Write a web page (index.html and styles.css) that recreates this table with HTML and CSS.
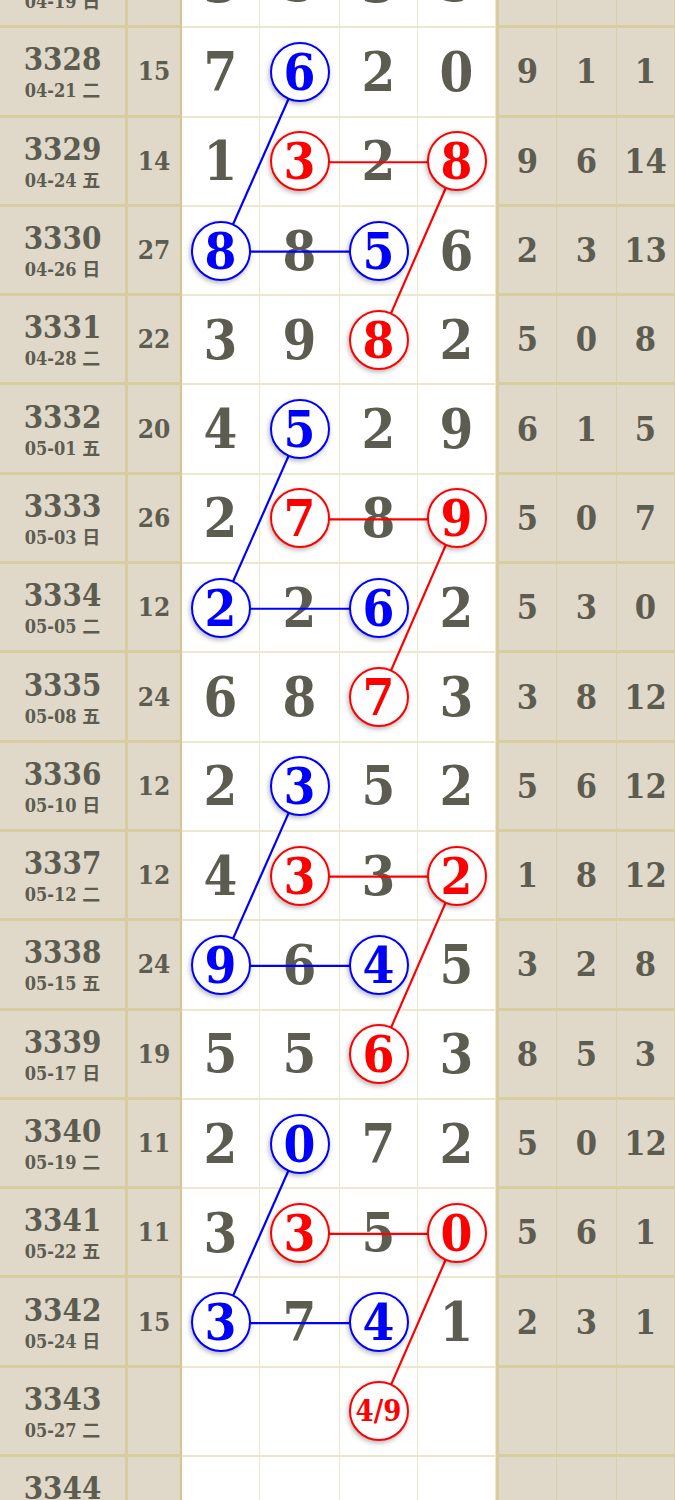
FILE: index.html
```html
<!DOCTYPE html>
<html lang="zh-CN">
<head>
    <meta charset="UTF-8">
    <meta name="viewport" content="width=device-width, initial-scale=1.0">
    <title>排列五 走势图</title>
    <link rel="stylesheet" href="styles.css">
</head>
<body>
    <div class="chart" id="chart">
        <svg class="links" id="links" xmlns="http://www.w3.org/2000/svg"></svg>
    </div>

    <script>
        // 期号, 日期, 和值, 四位号码, 右侧三列
        const rows = [
            ['3327', '04-19 日', '16', ['3', '5', '3', '5'], ['4', '2', '9']],
            ['3328', '04-21 二', '15', ['7', '6', '2', '0'], ['9', '1', '1']],
            ['3329', '04-24 五', '14', ['1', '3', '2', '8'], ['9', '6', '14']],
            ['3330', '04-26 日', '27', ['8', '8', '5', '6'], ['2', '3', '13']],
            ['3331', '04-28 二', '22', ['3', '9', '8', '2'], ['5', '0', '8']],
            ['3332', '05-01 五', '20', ['4', '5', '2', '9'], ['6', '1', '5']],
            ['3333', '05-03 日', '26', ['2', '7', '8', '9'], ['5', '0', '7']],
            ['3334', '05-05 二', '12', ['2', '2', '6', '2'], ['5', '3', '0']],
            ['3335', '05-08 五', '24', ['6', '8', '7', '3'], ['3', '8', '12']],
            ['3336', '05-10 日', '12', ['2', '3', '5', '2'], ['5', '6', '12']],
            ['3337', '05-12 二', '12', ['4', '3', '3', '2'], ['1', '8', '12']],
            ['3338', '05-15 五', '24', ['9', '6', '4', '5'], ['3', '2', '8']],
            ['3339', '05-17 日', '19', ['5', '5', '6', '3'], ['8', '5', '3']],
            ['3340', '05-19 二', '11', ['2', '0', '7', '2'], ['5', '0', '12']],
            ['3341', '05-22 五', '11', ['3', '3', '5', '0'], ['5', '6', '1']],
            ['3342', '05-24 日', '15', ['3', '7', '4', '1'], ['2', '3', '1']],
            ['3343', '05-27 二', '', ['', '', '4/9', ''], ['', '', '']],
            ['3344', '05-29 五', '', ['', '', '', ''], ['', '', '']]
        ];

        // 圈出的号码: 行序号 -> {列: 颜色}
        const marks = {};
        const links = [];
        for (let g = 1; g <= 13; g += 4) {
            marks[g] = { 1: 'blue' };
            marks[g + 1] = { 1: 'red', 3: 'red' };
            marks[g + 2] = { 0: 'blue', 2: 'blue' };
            marks[g + 3] = { 2: 'red' };
            links.push([g, 1, g + 2, 0, 'blue'], [g + 2, 0, g + 2, 2, 'blue']);
            links.push([g + 1, 1, g + 1, 3, 'red'], [g + 1, 3, g + 3, 2, 'red']);
        }

        const chart = document.getElementById('chart');
        const svg = document.getElementById('links');

        rows.forEach((r, i) => {
            const row = document.createElement('div');
            row.className = 'row';
            let html = `<div class="cell issue"><b>${r[0]}</b><small>${r[1]}</small></div>`;
            html += `<div class="cell sum">${r[2]}</div>`;
            r[3].forEach((d, c) => {
                const color = marks[i] && marks[i][c];
                const inner = color ? `<span class="ball ${color}${d.length > 1 ? ' guess' : ''}">${d}</span>` : d;
                html += `<div class="cell num" data-pos="${i}-${c}">${inner}</div>`;
            });
            r[4].forEach(s => { html += `<div class="cell stat">${s}</div>`; });
            row.innerHTML = html;
            chart.appendChild(row);
        });

        function center(i, c) {
            const box = chart.getBoundingClientRect();
            const rect = chart.querySelector(`[data-pos="${i}-${c}"]`).getBoundingClientRect();
            return [rect.left + rect.width / 2 - box.left, rect.top + rect.height / 2 - box.top];
        }

        links.forEach(([r1, c1, r2, c2, color]) => {
            const [x1, y1] = center(r1, c1);
            const [x2, y2] = center(r2, c2);
            const line = document.createElementNS('http://www.w3.org/2000/svg', 'line');
            line.setAttribute('x1', x1);
            line.setAttribute('y1', y1);
            line.setAttribute('x2', x2);
            line.setAttribute('y2', y2);
            line.setAttribute('class', color);
            svg.appendChild(line);
        });
    </script>
</body>
</html>
```

FILE: styles.css
```css
body {
    margin: 0;
    background: #fff;
    font-family: "DejaVu Serif Condensed", "DejaVu Serif", "Noto Sans CJK SC", serif;
    font-weight: bold;
    color: #5c5c50;
}
.chart {
    position: relative;
    margin-top: -61px;
}
.row {
    display: grid;
    grid-template-columns: 128px 54px 78px 80px 78px 78px 61px 60px 58px;
    height: 89.3px;
}
.cell {
    box-sizing: border-box;
    display: flex;
    align-items: center;
    justify-content: center;
    border-bottom: 2px solid #ede8cd;
    border-right: 1px solid #ede8cd;
}
.issue {
    flex-direction: column;
    background: #e0d8c8;
    border-right: 3px solid #d8cd9f;
    border-bottom: 3px solid #d8cd9f;
    padding-top: 2px;
}
.issue b {
    font-size: 31px;
    line-height: 34px;
}
.issue small {
    font-size: 18px;
    line-height: 22px;
    margin-top: 4px;
    font-weight: bold;
}
.sum {
    background: #e0d8c8;
    font-size: 26px;
    border-right: 2px solid #d3c78f;
    border-bottom: 3px solid #d8cd9f;
}
.num {
    font-size: 54px;
}
.stat {
    background: #e0d8c8;
    font-size: 34px;
    border-right: 1px solid #d8cfa8;
    border-bottom: 3px solid #d8cd9f;
}
.num + .stat {
    border-left: 3px solid #d8cd9f;
}
.ball {
    position: relative;
    z-index: 2;
    box-sizing: border-box;
    width: 60px;
    height: 60px;
    border-radius: 50%;
    background: #fff;
    display: flex;
    align-items: center;
    justify-content: center;
    font-size: 51px;
    box-shadow: -1px 2px 5px rgba(0, 0, 0, 0.3);
}
.ball.red {
    color: #f00;
    border: 2.5px solid #f00;
}
.ball.blue {
    color: #00f;
    border: 2.5px solid #00f;
}
.ball.guess {
    font-size: 29px;
}
.links {
    position: absolute;
    left: 0;
    top: 0;
    width: 100%;
    height: 100%;
    z-index: 1;
    pointer-events: none;
}
.links line {
    stroke-width: 2.2px;
}
.links .red {
    stroke: #f00;
}
.links .blue {
    stroke: #00f;
}
```
